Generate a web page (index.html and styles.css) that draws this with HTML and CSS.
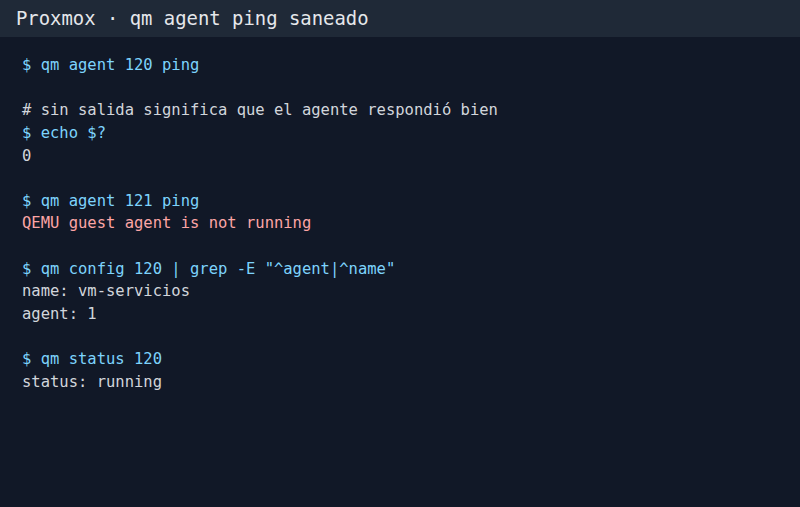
FILE: index.html
```html
<!DOCTYPE html>
<html lang="es">
<head>
<meta charset="utf-8">
<title>Proxmox · qm agent ping saneado</title>
<link rel="stylesheet" href="styles.css">
</head>
<body>
<div class="window">
  <header class="titlebar">Proxmox · qm agent ping saneado</header>
  <pre class="terminal"><span class="cmd">$ qm agent 120 ping</span>

<span class="out"># sin salida significa que el agente respondió bien</span>
<span class="cmd">$ echo $?</span>
<span class="out">0</span>

<span class="cmd">$ qm agent 121 ping</span>
<span class="err">QEMU guest agent is not running</span>

<span class="cmd">$ qm config 120 | grep -E "^agent|^name"</span>
<span class="out">name: vm-servicios</span>
<span class="out">agent: 1</span>

<span class="cmd">$ qm status 120</span>
<span class="out">status: running</span></pre>
</div>
</body>
</html>
```

FILE: styles.css
```css
html, body {
  margin: 0;
  padding: 0;
  height: 100%;
  background: #111827;
}

.window {
  display: flex;
  flex-direction: column;
  height: 100%;
  background: #111827;
  font-family: "DejaVu Sans Mono", "Liberation Mono", monospace;
}

.titlebar {
  height: 37px;
  box-sizing: border-box;
  padding: 0 0 0 16px;
  display: flex;
  align-items: center;
  background: #1f2937;
  color: #e5e7eb;
  font-size: 18.9px;
  line-height: 1;
  flex: none;
}

.terminal {
  margin: 0;
  padding: 17px 22px;
  font-family: inherit;
  font-size: 15.5px;
  line-height: 22.64px;
  color: #d1d5db;
  white-space: pre;
}

.cmd {
  color: #7dd3fc;
}

.out {
  color: #d1d5db;
}

.err {
  color: #fca5a5;
}
```
